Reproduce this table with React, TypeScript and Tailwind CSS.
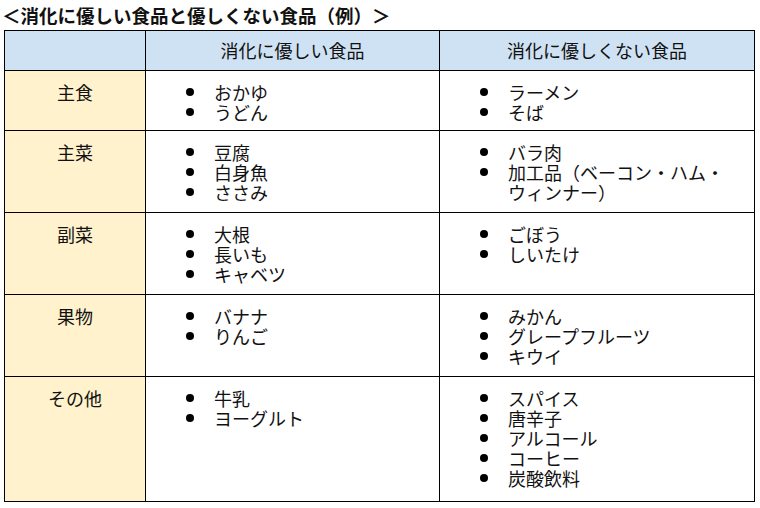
const rows: { label: string; good: string[]; bad: string[]; h: string }[] = [
  { label: "主食", good: ["おかゆ", "うどん"], bad: ["ラーメン", "そば"], h: "h-[60px]" },
  {
    label: "主菜",
    good: ["豆腐", "白身魚", "ささみ"],
    bad: ["バラ肉", "加工品（ベーコン・ハム・ウィンナー）"],
    h: "h-[82px]",
  },
  { label: "副菜", good: ["大根", "長いも", "キャベツ"], bad: ["ごぼう", "しいたけ"], h: "h-[82px]" },
  {
    label: "果物",
    good: ["バナナ", "りんご"],
    bad: ["みかん", "グレープフルーツ", "キウイ"],
    h: "h-[82px]",
  },
  {
    label: "その他",
    good: ["牛乳", "ヨーグルト"],
    bad: ["スパイス", "唐辛子", "アルコール", "コーヒー", "炭酸飲料"],
    h: "h-[125px]",
  },
];

function BulletList({ items }: { items: string[] }) {
  return (
    <ul className="pl-[40px] pr-[20px]">
      {items.map((item) => (
        <li key={item} className="flex items-start leading-[20px]">
          <span className="w-[28px] shrink-0 flex items-center h-[20px]">
            <span className="block w-[8px] h-[8px] rounded-full bg-black" />
          </span>
          <span>{item}</span>
        </li>
      ))}
    </ul>
  );
}

export default function App() {
  return (
    <div
      className="w-[760px] h-[508px] bg-white text-[#111] text-[18px]"
      style={{ fontFamily: '"Noto Sans CJK JP", "Noto Sans", sans-serif' }}
    >
      <div className="h-[30px] pl-[2px] pt-[3px] font-bold text-[18.5px] leading-[24px]">
        ＜消化に優しい食品と優しくない食品（例）＞
      </div>
      <table className="ml-[4px] w-[750px] table-fixed border-collapse">
        <colgroup>
          <col className="w-[141px]" />
          <col className="w-[294px]" />
          <col className="w-[315px]" />
        </colgroup>
        <thead>
          <tr className="h-[40px] bg-[#cfe2f3]">
            <th className="border border-black" />
            <th className="border border-black font-normal text-center">消化に優しい食品</th>
            <th className="border border-black font-normal text-center">消化に優しくない食品</th>
          </tr>
        </thead>
        <tbody>
          {rows.map((r) => (
            <tr key={r.label} className={r.h}>
              <td className="border border-black bg-[#fff2cc] align-top text-center pt-[11px] leading-[20px]">
                {r.label}
              </td>
              <td className="border border-black align-top pt-[11px]">
                <BulletList items={r.good} />
              </td>
              <td className="border border-black align-top pt-[11px]">
                <BulletList items={r.bad} />
              </td>
            </tr>
          ))}
        </tbody>
      </table>
    </div>
  );
}
